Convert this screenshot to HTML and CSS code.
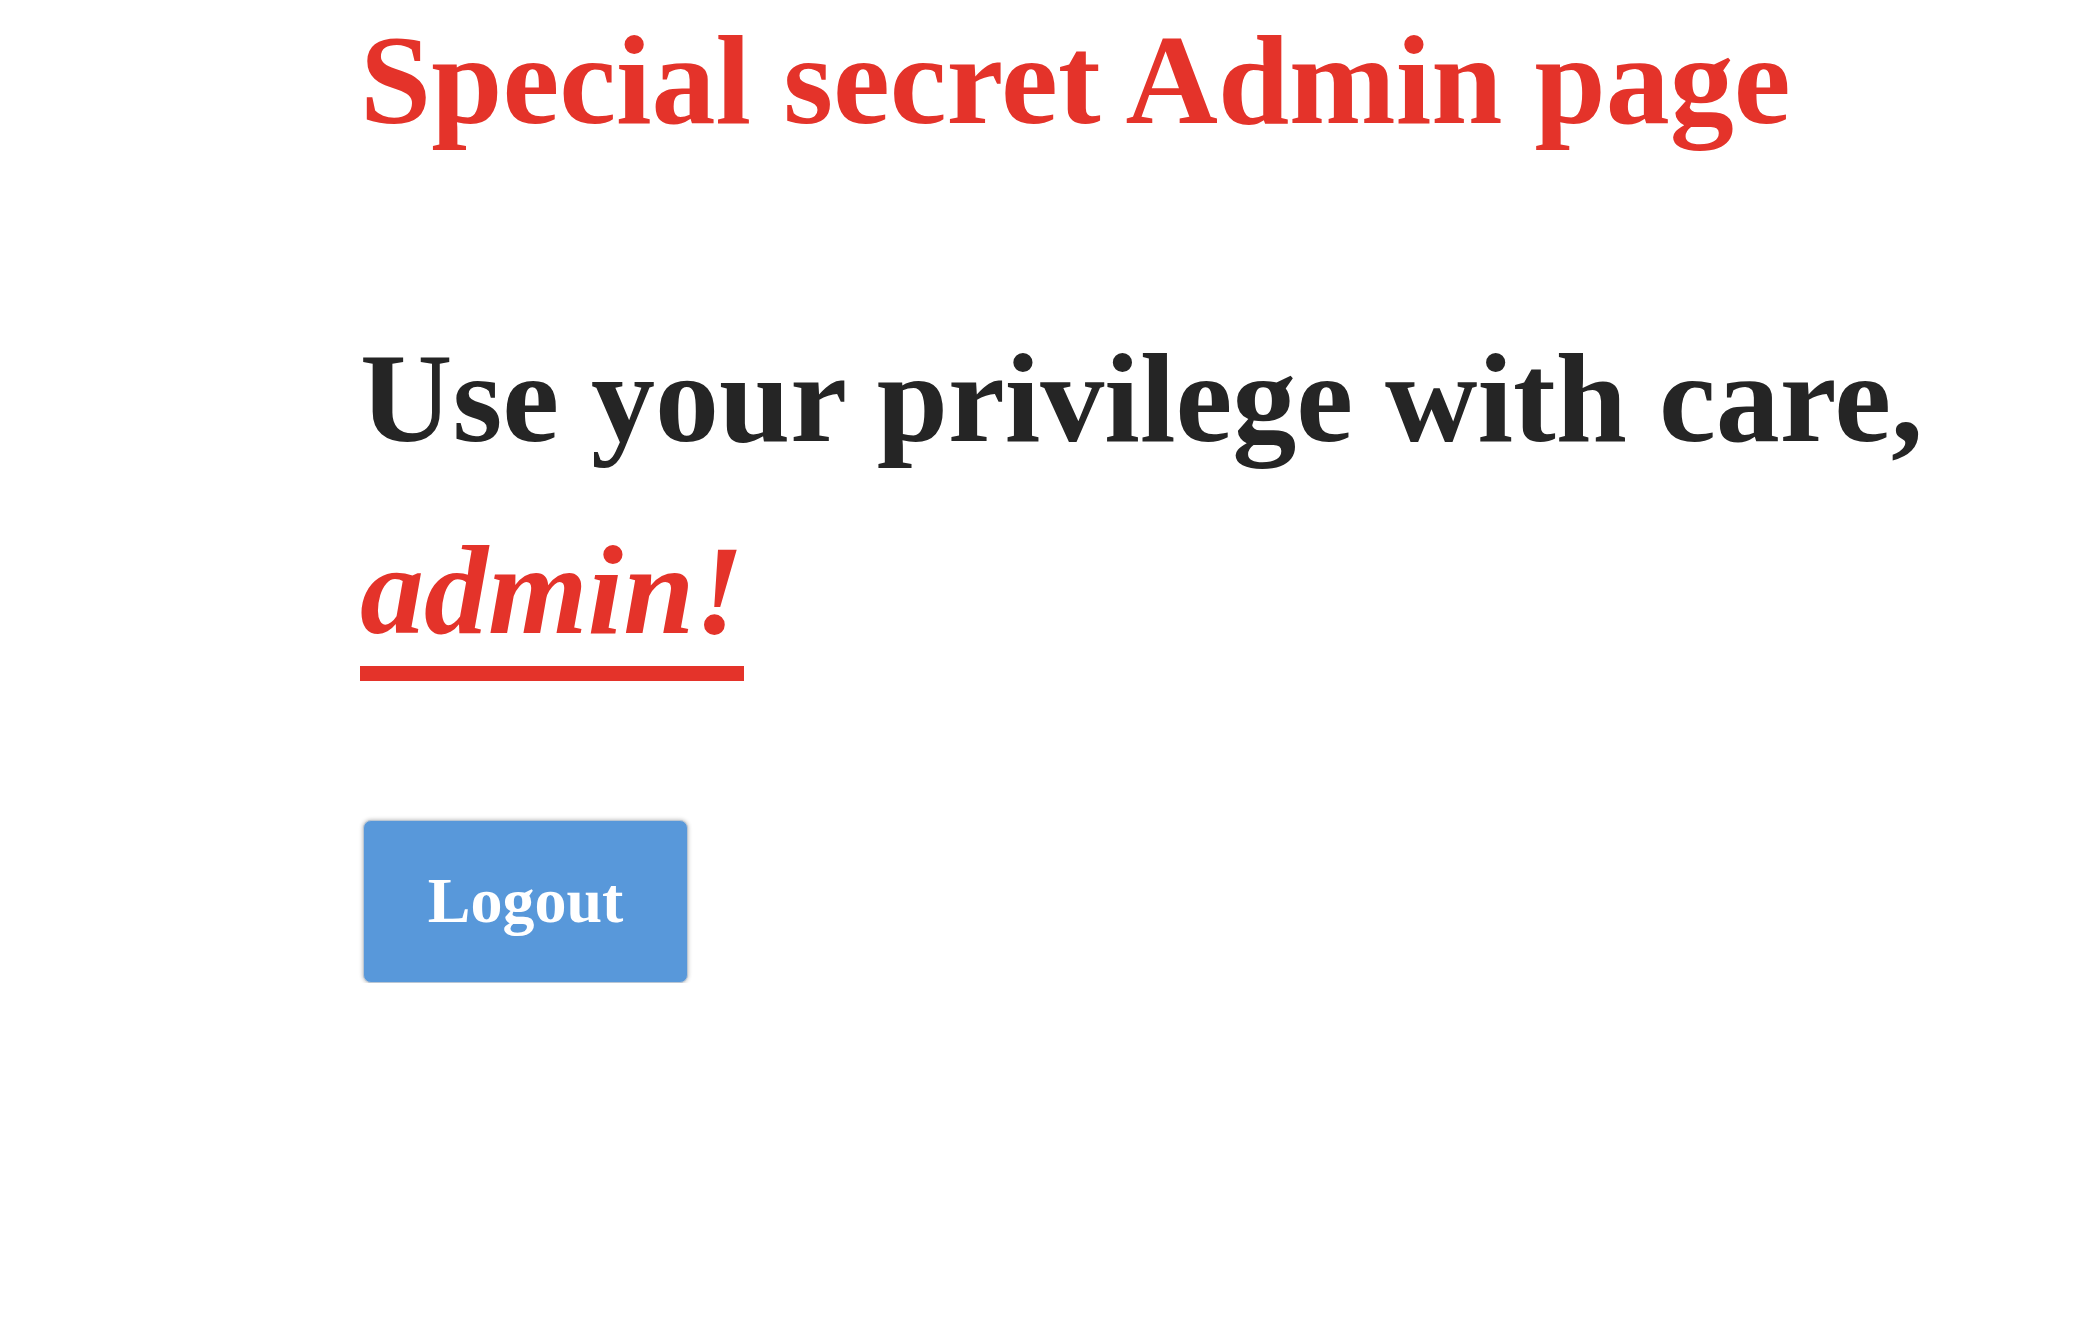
FILE: index.html
```html
<!DOCTYPE html>
<html lang="en">
<head>
<meta charset="utf-8">
<title>Admin</title>
<link rel="stylesheet" href="styles.css">
</head>
<body>
<main class="page">
  <h1 class="title">Special secret Admin page</h1>
  <h2 class="greeting">Use your privilege with care, <em class="name">admin!</em></h2>
  <button class="logout" type="button">Logout</button>
</main>
</body>
</html>
```
FILE: styles.css
```css
html, body {
  margin: 0;
  background: #ffffff;
}
body {
  font-family: "Liberation Serif", "Times New Roman", serif;
  padding-top: 10px;
}
.page {
  margin-left: 360px;
  display: flex;
  flex-direction: column;
  align-items: flex-start;
}
.title {
  margin: 0;
  font-size: 128px;
  line-height: 1.1;
  font-weight: 700;
  color: #e4332a;
  white-space: nowrap;
}
.greeting {
  margin: 151px 0 0;
  font-size: 128px;
  line-height: 192px;
  font-weight: 700;
  color: #252525;
  width: 1600px;
}
.name {
  font-style: italic;
  color: #e4332a;
  padding-bottom: 5px;
  border-bottom: 15px solid #e4332a;
}
.logout {
  margin: 134px 0 0 3px;
  width: 325px;
  height: 163px;
  background: #5898da;
  color: #ffffff;
  border: 1px solid #b9c6d4;
  border-radius: 8px;
  box-shadow: 0 0 4px rgba(0, 0, 0, 0.3);
  font-family: "Liberation Serif", "Times New Roman", serif;
  font-size: 64px;
  font-weight: 700;
  padding: 0;
}
```
